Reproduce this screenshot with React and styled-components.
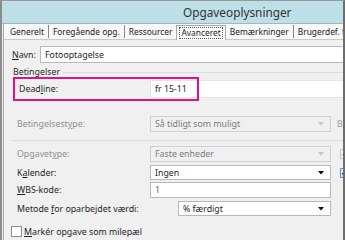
import React from 'react';
import styled, { createGlobalStyle } from 'styled-components';

const font = '"Noto Sans", "Open Sans", Arial, sans-serif';

const Global = createGlobalStyle`
    html, body {
        margin: 0;
        padding: 0;
        background: #f0f0f0;
    }
    body {
        font-family: ${font};
    }
`;

const Dialog = styled.div`
    width: 345px;
    height: 240px;
    box-sizing: border-box;
    border-top: 1px solid #9a9a9a;
    border-left: 2px solid #8c8c8c;
    border-right: 2px solid #6e6e6e;
    background: #f0f0f0;
    overflow: hidden;
    display: flex;
    flex-direction: column;
`;

const TitleBar = styled.div`
    height: 22px;
    flex: none;
    background: #bcdfe8;
    border-bottom: 1px solid #9fb7bd;
    display: flex;
    align-items: center;
    padding-left: 181px;
    font-size: 11.8px;
    color: #333;
`;

const Frame = styled.div`
    flex: 1;
    margin-left: 1px;
    border-left: 1px solid #a9a9a9;
    display: flex;
    flex-direction: column;
    min-height: 0;
`;

const TabStrip = styled.div`
    height: 15px;
    flex: none;
    display: flex;
    align-items: flex-end;
    background: #f8f8f8;
    border-bottom: 1px solid #c8c8c8;
    padding-left: 2px;
    font-size: 8.4px;
    color: #1a1a1a;
    white-space: nowrap;
`;

const Tab = styled.div`
    height: ${p => (p.$active ? 15 : 13)}px;
    box-sizing: border-box;
    display: flex;
    align-items: center;
    padding: 0 ${p => (p.$active ? 2 : 4)}px;
    margin-bottom: ${p => (p.$active ? -1 : 1)}px;
    background: ${p => (p.$active ? '#fff' : 'transparent')};
    border: ${p => (p.$active ? '1px solid #a8a8a8' : 'none')};
    border-bottom: none;
    border-right: ${p => (p.$sep ? '1px solid #8a8a8a' : p.$active ? '1px solid #a8a8a8' : 'none')};
`;

const Focus = styled.span`
    border: 1px dotted #555;
    padding: 0 1px;
    line-height: 10px;
`;

const Panel = styled.div`
    flex: 1;
    display: flex;
    flex-direction: column;
    padding: 6px 0 0 8px;
    font-size: 8.8px;
    color: #1e1e1e;
`;

const Row = styled.div`
    display: flex;
    align-items: center;
    margin-top: ${p => p.$top || 0}px;
    height: ${p => p.$h || 16}px;
    position: relative;
`;

const Label = styled.div`
    width: ${p => p.$w}px;
    flex: none;
    padding-left: ${p => p.$pl || 0}px;
    box-sizing: border-box;
    color: ${p => (p.$disabled ? '#8f8f8f' : '#1e1e1e')};
    white-space: nowrap;
`;

const U = styled.span`
    text-decoration: underline;
`;

const TextBox = styled.div`
    height: ${p => p.$h || 16}px;
    box-sizing: border-box;
    width: ${p => p.$w}px;
    flex: none;
    background: #fff;
    border: 1px solid ${p => p.$border || '#b8b8b8'};
    display: flex;
    align-items: center;
    padding-left: 4px;
    color: ${p => p.$color || '#1e1e1e'};
    white-space: nowrap;
`;

const Select = styled.div`
    height: ${p => p.$h || 16}px;
    width: ${p => p.$w}px;
    box-sizing: border-box;
    flex: none;
    background: ${p => (p.$disabled ? '#f0f0f0' : '#fff')};
    border: 1px solid ${p => (p.$disabled ? '#cfcfcf' : '#b8b8b8')};
    color: ${p => (p.$disabled ? '#7a7a7a' : '#1e1e1e')};
    display: flex;
    align-items: center;
    padding: 0 6px 0 4px;
    white-space: nowrap;
`;

const SelectText = styled.span`
    flex: 1;
`;

const Arrow = ({ disabled }) => (
    <svg width="6" height="4" viewBox="0 0 6 4">
        <polygon points="0,0 6,0 3,3.5" fill={disabled ? '#c4c4c4' : '#111'} />
    </svg>
);

const SideText = styled.span`
    margin-left: 6px;
    color: #a0a0a0;
`;

const SideBox = styled.span`
    margin-left: 9px;
    width: 10px;
    height: 10px;
    flex: none;
    box-sizing: border-box;
    border: 1px solid ${p => (p.$on ? '#6f8fb4' : '#c8c8c8')};
    background: ${p => (p.$on ? '#dfe9f5' : '#f4f4f4')};
    display: flex;
    align-items: center;
    justify-content: center;
`;

const Tick = ({ on }) => (
    <svg width="8" height="8" viewBox="0 0 8 8">
        <polyline
            points="1,4 3,6.5 7,1"
            fill="none"
            stroke={on ? '#2a4f80' : '#bbb'}
            strokeWidth="1.2"
        />
    </svg>
);

const GroupHead = styled.div`
    display: flex;
    align-items: center;
    margin-top: 4px;
    height: 10px;
    padding-left: 1px;
    gap: 3px;
`;

const GroupLine = styled.div`
    flex: 1;
    height: 1px;
    background: #d9dee6;
`;

const Divider = styled.div`
    height: 1px;
    background: #d9dee6;
    margin-top: 8px;
`;

const Highlight = styled.div`
    position: absolute;
    left: 1px;
    top: 0;
    width: 186px;
    height: 24px;
    box-sizing: border-box;
    border: 2px solid #e3127f;
    pointer-events: none;
`;

const CheckRow = styled.label`
    display: flex;
    align-items: center;
    gap: 2px;
    margin-top: 10px;
    height: 11px;
    margin-left: -1px;
`;

const Box = styled.span`
    width: 11px;
    height: 11px;
    box-sizing: border-box;
    border: 1px solid #8e8e8e;
    background: #fff;
    flex: none;
`;

const App = () => (
    <>
        <Global />
        <Dialog>
            <TitleBar>Opgaveoplysninger</TitleBar>
            <Frame>
                <TabStrip>
                    <Tab $sep>Generelt</Tab>
                    <Tab $sep>Foregående opg.</Tab>
                    <Tab>Ressourcer</Tab>
                    <Tab $active>
                        <Focus>Avanceret</Focus>
                    </Tab>
                    <Tab $sep>Bemærkninger</Tab>
                    <Tab>Brugerdef. f</Tab>
                </TabStrip>
                <Panel>
                    <Row $h={17}>
                        <Label $w={28}>
                            <U>N</U>avn:
                        </Label>
                        <TextBox $w={320} $h={17}>Fotooptagelse</TextBox>
                    </Row>
                    <GroupHead>
                        Betingelser
                        <GroupLine />
                    </GroupHead>
                    <Row $h={24}>
                        <Label $w={138} $pl={7}>
                            Dead<U>l</U>ine:
                        </Label>
                        <TextBox $w={220} $h={18} $border="#e4e4e4">
                            fr 15-11
                        </TextBox>
                        <Highlight />
                    </Row>
                    <Row $top={15}>
                        <Label $w={138} $pl={5} $disabled>
                            Betingelsest<U>y</U>pe:
                        </Label>
                        <Select $w={181} $disabled>
                            <SelectText>Så tidligt som muligt</SelectText>
                            <Arrow disabled />
                        </Select>
                        <SideText>B</SideText>
                    </Row>
                    <Divider />
                    <Row $top={5}>
                        <Label $w={138} $pl={5} $disabled>
                            Opgavet<U>y</U>pe:
                        </Label>
                        <Select $w={181} $disabled>
                            <SelectText>Faste enheder</SelectText>
                            <Arrow disabled />
                        </Select>
                        <SideBox>
                            <Tick />
                        </SideBox>
                    </Row>
                    <Row $top={3} $h={15}>
                        <Label $w={138} $pl={5}>
                            K<U>a</U>lender:
                        </Label>
                        <Select $w={181} $h={15}>
                            <SelectText>Ingen</SelectText>
                            <Arrow />
                        </Select>
                        <SideBox $on>
                            <Tick on />
                        </SideBox>
                    </Row>
                    <Row $top={2}>
                        <Label $w={138} $pl={5}>
                            <U>W</U>BS-kode:
                        </Label>
                        <TextBox $w={181} $color="#666">1</TextBox>
                    </Row>
                    <Row $top={3} $h={15}>
                        <Label $w={166} $pl={5}>
                            Metode <U>f</U>or oparbejdet værdi:
                        </Label>
                        <Select $w={153} $h={15}>
                            <SelectText>% færdigt</SelectText>
                            <Arrow />
                        </Select>
                    </Row>
                    <CheckRow>
                        <Box />
                        <span>
                            <U>M</U>arkér opgave som milepæl
                        </span>
                    </CheckRow>
                </Panel>
            </Frame>
        </Dialog>
    </>
);

export default App;
